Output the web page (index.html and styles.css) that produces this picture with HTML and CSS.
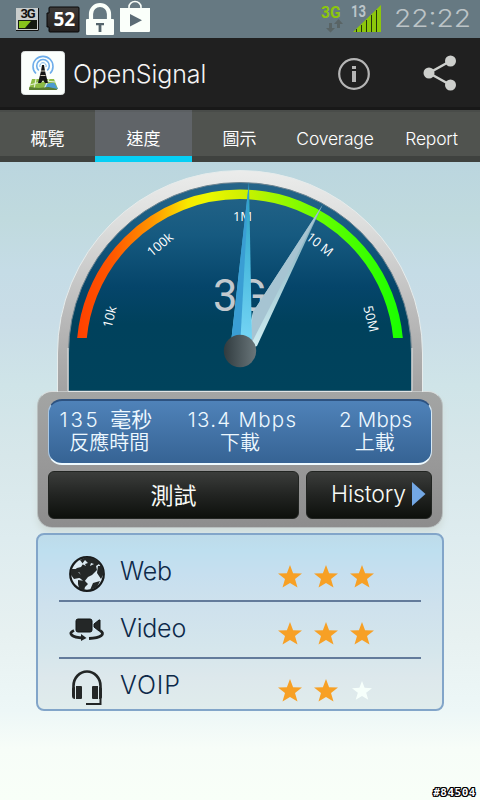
FILE: index.html
```html
<!DOCTYPE html>
<html lang="zh-Hant">
<head>
<meta charset="utf-8">
<title>OpenSignal</title>
<link rel="stylesheet" href="styles.css">
</head>
<body>
<div class="screen">
  <header class="status">
    <svg class="status-left" width="160" height="38" viewBox="0 0 160 38">
      <defs><linearGradient id="batt" x1="0" y1="0" x2="0" y2="1"><stop offset="0" stop-color="#3d3a38"/><stop offset="1" stop-color="#24201f"/></linearGradient></defs>
      <rect x="16" y="8" width="23" height="23" fill="#c9cdcc"/>
      <path d="M16 30.500h22.500V8" fill="none" stroke="#111"/>
      <rect x="18" y="20" width="19" height="9" fill="#151a12"/>
      <path d="M19 21h12l-6 7h-6z" fill="#86c21c"/>
      <text x="20.500" y="18" class="net-small" textLength="15">3G</text>
      <path d="M50 7h28q1 0 1 1v23q0 1-1 1H50q-1 0-1-1v-4h-2V13h2V8q0-1 1-1z" fill="url(#batt)" stroke="#080808"/>
      <text x="53.500" y="25.500" class="batt-text" textLength="21.500">52</text>
      <path d="M91 20V14a9 9 0 0 1 18 0V20" fill="none" stroke="#fafffa" stroke-width="4.200"/>
      <rect x="86" y="19" width="28" height="16" rx="1" fill="#fafffa"/>
      <path d="M96 23h8v2.300h-2.600V32h-2.800v-6.700H96z" fill="#55656c"/>
      <path d="M129 9V7a6 5.500 0 0 1 12 0V9" fill="none" stroke="#fafffa" stroke-width="1.600"/>
      <path d="M120 8h30v23q0 1-1 1h-28q-1 0-1-1z" fill="#fafffa"/>
      <path d="M130 14l12 6.200-12 6.200z" fill="#5b6b75"/>
    </svg>
    <svg class="status-right" width="160" height="38" viewBox="320 0 160 38">
      <text x="321" y="17.500" class="net" textLength="19.500" lengthAdjust="spacingAndGlyphs">3G</text>
      <path d="M329 23v5h-3l4.500 4.500L335 28h-3v-5zM337 28v-4h-3l4.500-5 4.500 5h-3v4z" fill="#596465"/>
      <text x="351" y="17" class="bars-num" textLength="15" lengthAdjust="spacingAndGlyphs">13</text>
      <path d="M353 32L381 5v27z" fill="#8dc70c"/>
      <path d="M356.500 29v3M361.500 25v7M366.500 20v12M371.500 15v17M376.500 10v22" stroke="#24360c"/>
      <text x="394" y="27" class="clock" textLength="77" lengthAdjust="spacingAndGlyphs">22:22</text>
    </svg>
  </header>

  <div class="appbar">
    <svg class="logo" width="44" height="44" viewBox="0 0 44 44">
      <rect x=".5" y=".5" width="43" height="43" rx="3" fill="#fbfffc" stroke="#dfe3e2"/>
      <path d="M11 28l22 0 4 10H8z" fill="#8dbb43"/>
      <path d="M24 33l9-1.500 4 6.500H23z" fill="#4d9bd0"/>
      <path d="M9 34l14-4 12 1M15 28l-2 10M28 28l-5 10" fill="none" stroke="#e3efd3" stroke-width="1.200"/>
      <path d="M8.500 36l9 1 10-1 9 2-1 1H8z" fill="#587c31"/>
      <path d="M15 22.500a10 10 0 1 1 14 0M17.800 19.500a6.300 6.300 0 1 1 8.400 0" fill="none" stroke="#6dadea" stroke-width="1.600"/>
      <path d="M19 16a3.200 3.200 0 1 1 6 0" fill="none" stroke="#7db7ea"/>
      <path d="M21 14h2l1 6 3 12h-3l-2-3-2 3h-3l3-12z" fill="#151515"/>
      <path d="M20 20h4M19.500 24.500h5" stroke="#c8c2b3"/>
    </svg>
    <h1 class="title">OpenSignal</h1>
    <svg class="info" width="32" height="32" viewBox="0 0 32 32">
      <circle cx="16" cy="16" r="14.800" fill="none" stroke="#b5b5b5" stroke-width="2.200"/>
      <path d="M14 8h4v3h-4zM14 13h4v11h-4z" fill="#b5b5b5"/>
    </svg>
    <svg class="share" width="34" height="36" viewBox="0 0 34 36">
      <path d="M27.500 6L6 18l21.500 12" fill="none" stroke="#cdcfcc" stroke-width="2.500"/>
      <g fill="#cdcfcc"><circle cx="27.500" cy="6" r="5.500"/><circle cx="6" cy="18" r="5.500"/><circle cx="27.500" cy="30" r="5.500"/></g>
    </svg>
  </div>

  <nav class="tabs">
    <span class="tab">概覽</span>
    <span class="tab active">速度</span>
    <span class="tab">圖示</span>
    <span class="tab latin">Coverage</span>
    <span class="tab latin">Report</span>
  </nav>

  <main class="content">
    <svg class="gauge" width="366" height="222" viewBox="57 170 366 222">
      <defs>
        <linearGradient id="rim" x1="0" y1="0" x2="0" y2="1"><stop offset="0" stop-color="#ebeceb"/><stop offset=".25" stop-color="#dcdddc"/><stop offset=".65" stop-color="#bababa"/><stop offset="1" stop-color="#a2a2a2"/></linearGradient>
        <linearGradient id="face" x1="0" y1="0" x2="0" y2="1"><stop offset="0" stop-color="#266589"/><stop offset=".25" stop-color="#165a80"/><stop offset=".5" stop-color="#05456a"/><stop offset=".68" stop-color="#00415c"/><stop offset="1" stop-color="#00435c"/></linearGradient>
        <linearGradient id="scale" gradientUnits="userSpaceOnUse" x1="77" y1="0" x2="403" y2="0"><stop offset="0" stop-color="#ff4000"/><stop offset=".11" stop-color="#ff5800"/><stop offset=".23" stop-color="#ff9500"/><stop offset=".34" stop-color="#f8e800"/><stop offset=".4" stop-color="#ecf800"/><stop offset=".5" stop-color="#d2f000"/><stop offset=".62" stop-color="#9cf800"/><stop offset=".76" stop-color="#62ff00"/><stop offset="1" stop-color="#18ff00"/></linearGradient>
        <linearGradient id="hub" x1="0" y1="0" x2="1" y2="0"><stop offset="0" stop-color="#303b3f"/><stop offset="1" stop-color="#6a767a"/></linearGradient>
        <linearGradient id="blue" x1="0" y1="0" x2="0" y2="1"><stop offset="0" stop-color="#279dbd"/><stop offset=".5" stop-color="#4dbce0"/><stop offset="1" stop-color="#7bd9f8"/></linearGradient>
        <linearGradient id="pale" x1="0" y1="0" x2="0" y2="1"><stop offset="0" stop-color="#78a7b7"/><stop offset="1" stop-color="#d0edf1"/></linearGradient>
        <clipPath id="arcClip"><path d="M57 170h366v168H57z"/></clipPath>
      </defs>
      <path d="M57.500 392V353a182.500 182.500 0 0 1 365 0v39z" fill="url(#rim)" stroke="#e6ecec"/>
      <path d="M68.500 391V353a171.500 170.500 0 0 1 343 0v38z" fill="url(#face)" stroke="#6d8490"/>
      <path d="M68 391V348M412 391V348M68 391.500h344" fill="none" stroke="#e1e5e5"/>
      <circle cx="240" cy="353" r="158.700" fill="none" stroke="url(#scale)" stroke-width="9.600" clip-path="url(#arcClip)"/>
      <g class="marks">
        <text transform="translate(114 318) rotate(-76)">10k</text>
        <text transform="translate(163 248) rotate(-40)">100k</text>
        <text x="242.500" y="221">1M</text>
        <text transform="translate(317 248) rotate(38)">10 M</text>
        <text transform="translate(366.500 320) rotate(76)">50M</text>
      </g>
      <text x="213" y="310.500" class="gauge-text" textLength="54" lengthAdjust="spacingAndGlyphs">3G</text>
      <path d="M322.500 205L253 312l-9 35 5 2 8-3z" fill="url(#pale)"/>
      <path d="M322.500 205L253 312l-4 36z" fill="#a6c4d2"/>
      <path d="M249 182L231 343l9 9 12-9z" fill="url(#blue)"/>
      <path d="M249 182L231 343l9 5z" fill="#3a9ed4"/>
      <circle cx="240" cy="351" r="16.200" fill="url(#hub)"/>
    </svg>

    <section class="console">
      <div class="results">
        <div class="result first"><span class="value">135 <b>毫秒</b></span><span class="label">反應時間</span></div>
        <div class="result mid"><span class="value">13.4 Mbps</span><span class="label">下載</span></div>
        <div class="result last"><span class="value">2 Mbps</span><span class="label">上載</span></div>
      </div>
      <div class="buttons">
        <div class="button test">測試</div>
        <div class="button history"><span>History</span><svg width="14" height="24" viewBox="0 0 14 24"><path d="M0 0l13.500 12L0 24z" fill="#73a7e4"/></svg></div>
      </div>
    </section>

    <svg class="symbols" width="0" height="0"><symbol id="star" viewBox="0 0 24 24"><path d="M12 0l3.100 8.200 8.900.4-7 5.500 2.500 8.400L12 17.900l-7.500 4.600L7 14.100 0 8.600l8.900-.4z"/></symbol></svg>
    <section class="ratings">
      <div class="rating">
        <svg class="icon" width="40" height="40" viewBox="0 0 40 40">
          <circle cx="20" cy="20" r="16.800" fill="#dceaf2" stroke="#181b1c" stroke-width="2.200"/>
          <path d="M13 6l6-3 10 2 6 6-3-1-3 2 1 4-5 5-4 2-4 5-4-4-4-2 5-1-2-3-4 1-2-2 4-3 4-1 2-3z" fill="#242727"/>
          <path d="M18 6l-3 4 4 2-1-2 3-1zM24 9l3 1-4 2z" fill="#dceaf2"/>
          <path d="M4 15l5 0 3 4 4 3 0 3-4-1-5 1-3-4zM11 26l7 1 3 3-3 3-1 4-5-3-1-4zM26 29l7-2-3 6-7 3zM31 12l4 0 2 7-3 6-4-6z" fill="#242727"/>
        </svg>
        <span class="name">Web</span>
        <div class="stars"><svg><use href="#star"/></svg><svg><use href="#star"/></svg><svg><use href="#star"/></svg></div>
      </div>
      <div class="rating">
        <svg class="icon" width="40" height="40" viewBox="0 0 40 40">
          <path d="M11 8h12q2 0 2 2v9q0 2-2 2H11q-2 0-2-2v-9q0-2 2-2zM27 13l5-4h1v11h-1l-5-4z" fill="#242727" stroke="#111414"/>
          <path d="M7 19.500c-7 3-2 7 9 7.500M33 19.500c6 3.500 1 7.500-11 8" fill="none" stroke="#202323" stroke-width="2.800"/>
          <path d="M14 23l5.500 4-5.500 3z" fill="#202323"/>
        </svg>
        <span class="name">Video</span>
        <div class="stars"><svg><use href="#star"/></svg><svg><use href="#star"/></svg><svg><use href="#star"/></svg></div>
      </div>
      <div class="rating">
        <svg class="icon" width="40" height="40" viewBox="0 0 40 40">
          <path d="M6.500 24v-6a13.500 14.500 0 0 1 27 0v6" fill="none" stroke="#222525" stroke-width="2.600"/>
          <path d="M5 21q0-2 3-2v12q-3 0-3-3zM9 18h5q1 0 1 1v11q0 1-1 1H9zM25 19q0-1 1-1h5v13h-5q-1 0-1-1zM32 19q3 0 3 2v8q0 2-3 2z" fill="#242727"/>
          <path d="M33.500 29v7H19" fill="none" stroke="#222525" stroke-width="2"/>
        </svg>
        <span class="name voip">VOIP</span>
        <div class="stars"><svg><use href="#star"/></svg><svg><use href="#star"/></svg><svg class="empty"><use href="#star"/></svg></div>
      </div>
    </section>
  </main>
  <span class="stamp">#84504</span>
</div>
</body>
</html>
```
FILE: styles.css
```css
* { box-sizing: border-box; }
body { margin: 0; font-family: Inter, "Noto Sans CJK TC", sans-serif; font-weight: 300; }
.screen { position: relative; width: 480px; height: 800px; overflow: hidden; background: #f8fff8; }
.status { height: 38px; display: flex; justify-content: space-between; background: #667982; }
.net-small { font: 700 13px Roboto, sans-serif; fill: #111; }
.batt-text { font: 700 19px "Open Sans", sans-serif; fill: #fff; }
.net { font: 700 16px Roboto, sans-serif; fill: #8dc70c; }
.bars-num { font: 700 16px Roboto, sans-serif; fill: #bbc5ca; }
.clock { font: 300 24px Inter, sans-serif; fill: #bcc4c7; }
.appbar { height: 72px; display: flex; align-items: center; padding: 0 24px 0 21px; background: #202020; border-bottom: 3px solid #181818; }
.logo { margin-top: 1px; }
.title { margin: 2px auto 0 8px; color: #f4f4f4; font: 300 25px Inter, sans-serif; letter-spacing: -.1px; }
.info { margin: 2px 53px 0 0; }
.share { margin: 1px -1px 0 0; }
.tabs { display: grid; grid-template-columns: 95px 97px 95px 97px 96px; height: 52px; background: #50534f; }
.tab { height: 52px; padding-top: 10px; border-bottom: 6px solid #3f423f; border-top: 2px solid #494c49; text-align: center; color: #fff; font-size: 17px; line-height: 34px; white-space: nowrap; font-weight: 400; }
.tab.active { background: #606468; border-bottom-color: #06cff5; border-top-color: #5b5f62; }
.tab.latin { font-size: 17.500px; font-weight: 300; letter-spacing: -.2px; padding-right: 1px; }
.content { height: 638px; padding-top: 8px; background: linear-gradient(#bbd6df 0, #c0dade 9%, #c5dce6 17%, #c9dde7 25%, #cfe4e8 35%, #d7e7ea 46%, #deecef 59%, #e7f1f1 74%, #edf7f7 86%, #f7fdf8 92%, #f8fff8 100%); }
.gauge { display: block; margin-left: 57px; }
.marks { font: 400 13px "Open Sans", sans-serif; fill: #fff; text-anchor: middle; }
.gauge-text { font: 400 45px Roboto, sans-serif; fill: #c2c9ce; }
.console { width: 406px; height: 137px; margin-left: 37px; margin-top: -1px; padding: 7px 10px 0; border: 1px solid #b9c0c0; border-top-color: #d9dede; border-radius: 15px; background: linear-gradient(#a3a5a4, #999, #8d8d8d); box-shadow: 0 5px 6px #d0dcda; }
.results { height: 66px; border-radius: 14px; border: 1px solid #2d5280; border-width: 2px 1px 2px; border-bottom-color: #eefaff; border-right-color: #d6e9f5; border-left-color: #a9c7e3; background: linear-gradient(#4f82b9, #366394); display: flex; color: #edf8ff; padding-top: 7px; }
.result { display: flex; flex-direction: column; align-items: center; white-space: nowrap; }
.first { width: 112px; margin-left: 1px; }
.mid { width: 157px; }
.last { width: 113px; }
.value { height: 24px; font-size: 20.500px; line-height: 24px; }
.first .value { letter-spacing: 2.800px; word-spacing: 1px; }
.first .label { margin-left: 7px; }
.mid .value { letter-spacing: 1.250px; margin-left: 5px; }
.last .value { margin-left: 2px; letter-spacing: .2px; }
.value b { font-weight: 400; font-size: 21px; letter-spacing: 0; }
.label { height: 22px; font-size: 20px; line-height: 22px; font-weight: 350; }
.buttons { display: flex; gap: 7px; margin-top: 6px; }
.button { height: 48px; border-radius: 6px; border: 1px solid #222522; background: linear-gradient(#3b3d3b, #222422 50%, #0d100c); color: #f7faf6; display: flex; align-items: center; }
.test { width: 251px; justify-content: center; font-size: 23px; font-weight: 400; padding-bottom: 2px; }
.history { width: 126px; justify-content: space-between; padding: 0 5px 3px 24px; font-size: 23px; letter-spacing: -.15px; }
.symbols { display: block; }
.ratings { width: 408px; height: 178px; margin: 5px 0 0 36px; padding: 10px 22px 0; border: 2px solid #82a5c9; border-radius: 8px; background: linear-gradient(#bddbea, #bedfef 9%, #c6dfef 22%, #cee1ed 40%, #d5e6ec 66%, #dde8ec 82%, #e0ecec); }
.rating { width: 362px; height: 57px; margin-left: -1px; display: flex; align-items: center; border-bottom: 2px solid #637b9b; }
.rating:last-child { border: 0; height: 55px; }
.icon { margin: 2px 0 0 8px; }
.name { width: 159px; margin: 0 0 3px 13px; font-size: 25px; letter-spacing: -.2px; color: #0d2949; }
.name.voip { letter-spacing: .9px; }
.stars { display: flex; gap: 12px; margin-top: 8px; fill: #f7a025; margin-left: -1px; }
.stars svg { width: 24px; height: 24px; }
.stars .empty { fill: #f6fffb; padding: 2px; }
.stamp { position: absolute; right: 4px; bottom: 0; color: #fff; font: 700 11px/15px "DejaVu Sans Mono", monospace; letter-spacing: .5px; text-shadow: -1px 0 #000, 1px 0 #000, 0 -1px #000, 0 1px #000, -1px -1px #000, 1px 1px #000, -1px 1px #000, 1px -1px #000; }
```
